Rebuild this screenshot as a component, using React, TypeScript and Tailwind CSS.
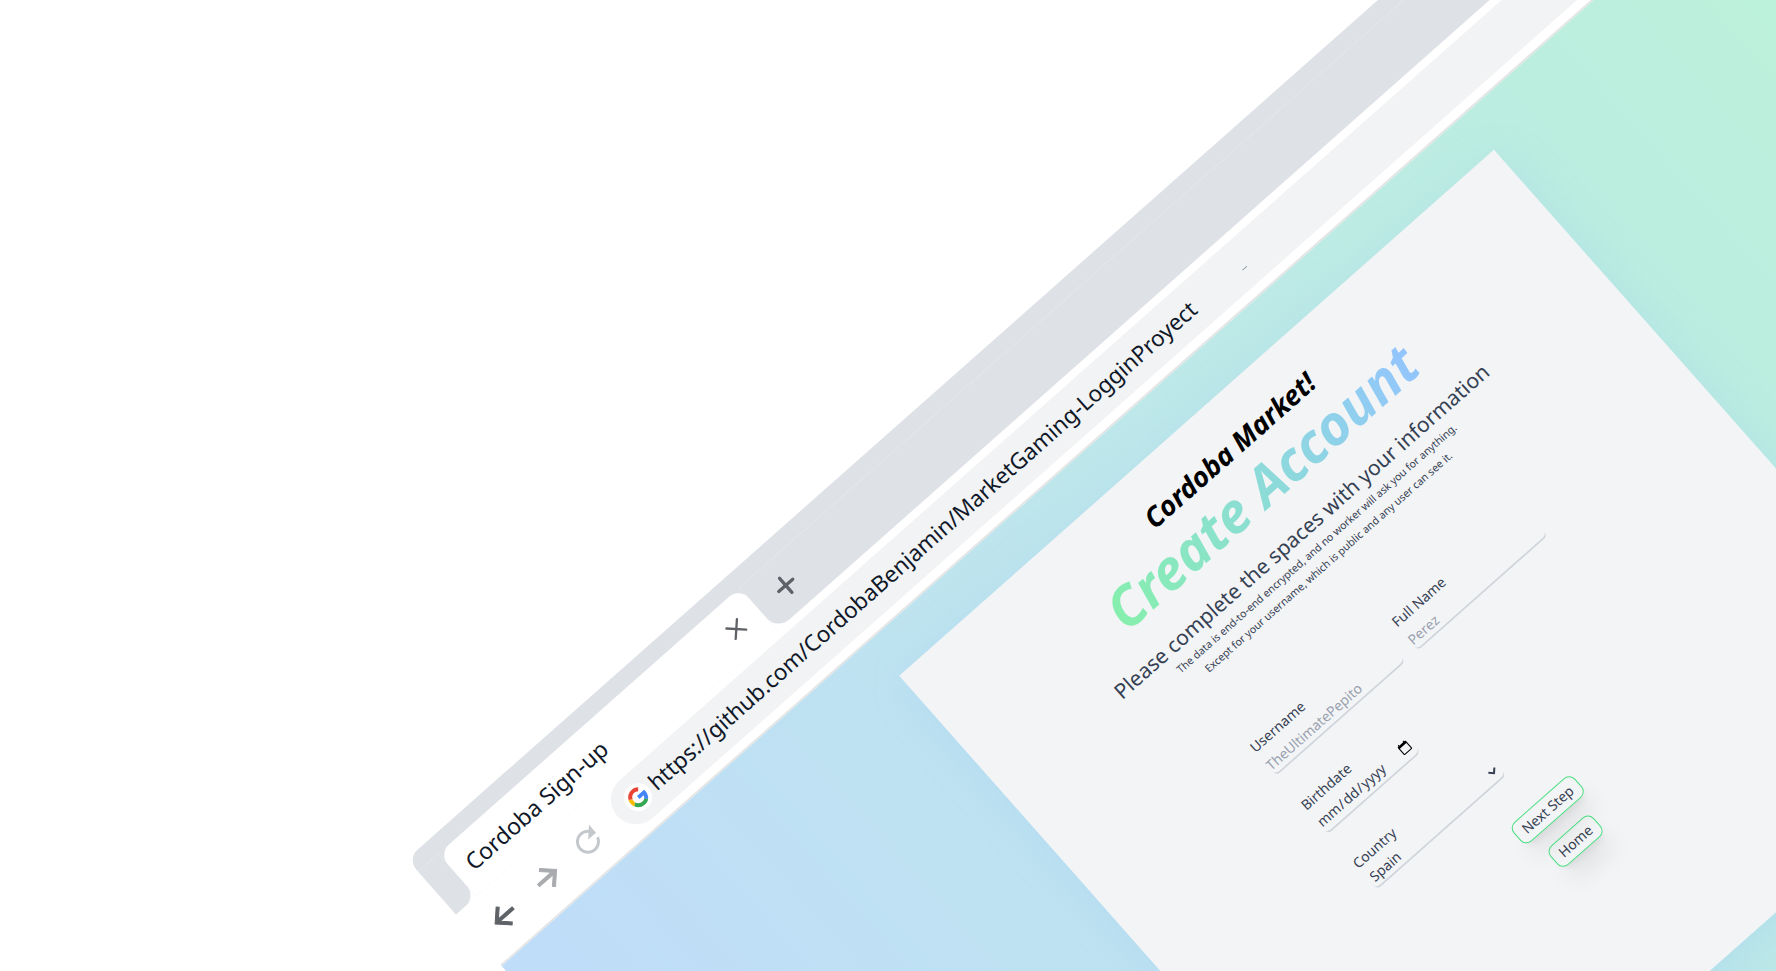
import React from 'react';
import { X, Plus } from 'lucide-react';

const GoogleIcon = () => (
  <svg viewBox="0 0 48 48" className="w-[20px] h-[20px]">
    <path fill="#EA4335" d="M24 9.5c3.54 0 6.71 1.22 9.21 3.6l6.85-6.85C35.9 2.38 30.47 0 24 0 14.62 0 6.51 5.38 2.56 13.22l7.98 6.19C12.43 13.72 17.74 9.5 24 9.5z" />
    <path fill="#4285F4" d="M46.98 24.55c0-1.57-.15-3.09-.38-4.55H24v9.02h12.94c-.58 2.96-2.26 5.48-4.78 7.18l7.73 6c4.51-4.18 7.09-10.36 7.09-17.65z" />
    <path fill="#FBBC05" d="M10.53 28.59c-.48-1.45-.76-2.99-.76-4.59s.27-3.14.76-4.59l-7.98-6.19C.92 16.46 0 20.12 0 24c0 3.88.92 7.54 2.56 10.78l7.97-6.19z" />
    <path fill="#34A853" d="M24 48c6.48 0 11.93-2.13 15.89-5.81l-7.73-6c-2.15 1.45-4.92 2.3-8.16 2.3-6.26 0-11.57-4.22-13.47-9.91l-7.98 6.19C6.51 42.62 14.62 48 24 48z" />
  </svg>
);

const ArrowBack = ({ className }: { className: string }) => (
  <svg viewBox="0 0 24 24" className={className} fill="currentColor" stroke="currentColor" strokeWidth={0.7}>
    <path d="M20 11H7.83l5.59-5.59L12 4l-8 8 8 8 1.41-1.41L7.83 13H20v-2z" />
  </svg>
);

const ArrowForward = ({ className }: { className: string }) => (
  <svg viewBox="0 0 24 24" className={className} fill="currentColor" stroke="currentColor" strokeWidth={0.7}>
    <path d="M4 11h12.17l-5.59-5.59L12 4l8 8-8 8-1.41-1.41L16.17 13H4v-2z" />
  </svg>
);

const Refresh = ({ className }: { className: string }) => (
  <svg viewBox="0 0 24 24" className={className} fill="currentColor">
    <path d="M17.65 6.35C16.2 4.9 14.21 4 12 4c-4.42 0-7.99 3.58-7.99 8s3.57 8 7.99 8c3.73 0 6.84-2.55 7.73-6h-2.08c-.82 2.33-3.04 4-5.65 4-3.31 0-6-2.69-6-6s2.69-6 6-6c1.66 0 3.14.69 4.22 1.78L13 11h7V4l-2.35 2.35z" />
  </svg>
);

const inputClass =
  "block w-full h-[23px] bg-transparent border-b-2 border-gray-300 rounded-md text-sm text-gray-700 placeholder:text-gray-400 outline-none";

export default function App() {
  return (
    <div className="relative w-full h-[971px] overflow-hidden bg-white font-['Noto_Sans',sans-serif]">
      <div className="absolute left-[407px] top-[859px] w-[1774px] origin-top-left rotate-[-41.5deg]">
        {/* tab strip */}
        <div className="flex h-[74px] pt-[17px] bg-[#dee1e6] rounded-tl-[14px]">
          <div className="w-[27px] bg-white">
            <div className="h-full bg-[#dee1e6] rounded-br-[14px]" />
          </div>
          <div className="w-[402px] flex items-center justify-between pl-[15px] pr-[16px] bg-white rounded-t-[14px]">
            <span className="text-[23px] text-gray-900">Cordoba Sign-up</span>
            <X size={28} strokeWidth={2} className="text-[#5f6368]" />
          </div>
          <div className="flex-1 bg-white">
            <div className="h-full flex items-center pl-[20px] bg-[#dee1e6] rounded-bl-[16px]">
              <Plus size={32} strokeWidth={2.5} className="text-[#5f6368]" />
            </div>
          </div>
        </div>

        {/* toolbar */}
        <div className="flex items-center h-[69px] pb-[2px] pl-[17px] border-b-2 border-[#e5e5e5] bg-white">
          <ArrowBack className="w-[36px] h-[36px] text-[#5f6368]" />
          <ArrowForward className="w-[36px] h-[36px] ml-[22px] text-[#a9abae]" />
          <Refresh className="w-[36px] h-[36px] ml-[18px] text-[#c4c7cc]" />
          <div className="flex flex-1 items-center h-[50px] ml-[21px] pl-[14px] bg-[#f1f3f4] rounded-l-full">
            <div className="flex items-center justify-center w-[28px] h-[28px] bg-white rounded-full">
              <GoogleIcon />
            </div>
            <span className="ml-[4px] text-[22.5px] text-gray-900">
              https://github.com/CordobaBenjamin/MarketGaming-LogginProyect
            </span>
            <span className="w-[6px] h-[1px] ml-[60px] mt-[12px] bg-gray-400" />
          </div>
        </div>

        {/* page */}
        <div className="h-[900px] pt-[46px] bg-linear-to-r from-[#bfdcf9] to-[#bbf3d7]">
          <div className="flex flex-col items-center w-[794px] h-[758px] mx-auto pt-[32px] bg-gray-100 shadow-[0_10px_40px_rgba(147,197,253,0.25)]">
            <h2 className="text-[27.5px] leading-[36px] font-bold italic text-black">Cordoba Market!</h2>
            <h1 className="mt-[-5px] text-[55px] leading-[70px] font-bold italic text-transparent bg-clip-text bg-linear-to-r from-[#86efac] to-[#93c5fd]">
              Create Account
            </h1>
            <p className="mt-[9px] text-[21px] leading-[32px] text-gray-700">
              Please complete the spaces with your information
            </p>
            <p className="mt-[-2px] text-[10.6px] leading-[18px] text-center text-gray-700">
              The data is end-to-end encrypted, and no worker will ask you for anything.
              <br />
              Except for your username, which is public and any user can see it.
            </p>

            <div className="grid grid-cols-2 gap-x-4 gap-y-[31px] w-[363px] mt-[71px]">
              <label className="block text-sm leading-[20px] text-gray-700">
                Username
                <input className={`${inputClass} mt-[3px]`} placeholder="TheUltimatePepito" />
              </label>
              <label className="block text-sm leading-[20px] text-gray-700">
                Full Name
                <input className={`${inputClass} mt-[3px]`} placeholder="Perez" />
              </label>
              <label className="col-start-1 block text-sm leading-[20px] text-gray-700">
                Birthdate
                <input
                  type="date"
                  className="block w-[124px] h-[27px] bg-transparent border-b-2 border-gray-300 rounded-md text-sm text-gray-700 outline-none"
                />
              </label>
              <label className="col-start-1 block text-sm leading-[20px] text-gray-700">
                Country
                <select className={inputClass} defaultValue="Spain">
                  <option>Spain</option>
                </select>
              </label>
            </div>

            <div className="flex flex-col items-center gap-[16px] mt-[40px]">
              <button className="h-[26px] px-2 text-sm text-gray-700 border border-[#4ade80] rounded-lg shadow-xl">
                Next Step
              </button>
              <button className="h-[26px] px-2 text-sm text-gray-700 border border-[#4ade80] rounded-lg shadow-xl">
                Home
              </button>
            </div>
          </div>
        </div>
      </div>
    </div>
  );
}
